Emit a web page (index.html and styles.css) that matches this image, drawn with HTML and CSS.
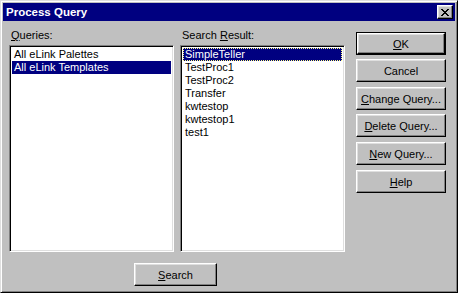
FILE: index.html
```html
<!DOCTYPE html>
<html>
<head>
<meta charset="utf-8">
<link rel="stylesheet" href="styles.css">
</head>
<body>
<div class="window">
  <div class="titlebar">
    <span class="title">Process Query</span>
    <button class="close" aria-label="Close">
      <svg width="8" height="7" viewBox="0 0 8 7" shape-rendering="crispEdges">
        <path d="M0 0h2v1h-2z M6 0h2v1h-2z M1 1h2v1h-2z M5 1h2v1h-2z M2 2h4v1h-4z M3 3h2v1h-2z M2 4h4v1h-4z M1 5h2v1h-2z M5 5h2v1h-2z M0 6h2v1h-2z M6 6h2v1h-2z" fill="#000"/>
      </svg>
    </button>
  </div>
  <div class="content">
    <div class="main">
      <div class="lists">
        <div class="col">
          <div class="label"><u>Q</u>ueries:</div>
          <div class="listbox">
            <div class="item">All eLink Palettes</div>
            <div class="item selected">All eLink Templates</div>
          </div>
        </div>
        <div class="col">
          <div class="label">Search <u>R</u>esult:</div>
          <div class="listbox">
            <div class="item selected focused">SimpleTeller</div>
            <div class="item">TestProc1</div>
            <div class="item">TestProc2</div>
            <div class="item">Transfer</div>
            <div class="item">kwtestop</div>
            <div class="item">kwtestop1</div>
            <div class="item">test1</div>
          </div>
        </div>
      </div>
      <button class="btn search"><u>S</u>earch</button>
    </div>
    <div class="buttons">
      <div class="default-wrap"><button class="btn"><u>O</u>K</button></div>
      <button class="btn g4">Cancel</button>
      <button class="btn g5"><u>C</u>hange Query...</button>
      <button class="btn g4"><u>D</u>elete Query...</button>
      <button class="btn g5"><u>N</u>ew Query...</button>
      <button class="btn g5"><u>H</u>elp</button>
    </div>
  </div>
</div>
</body>
</html>
```

FILE: styles.css
```css
html, body {
  margin: 0;
  padding: 0;
  background: #c0c0c0;
}

.window {
  width: 458px;
  height: 293px;
  box-sizing: border-box;
  background: #c0c0c0;
  border: 1px solid;
  border-color: #dfdfdf #000 #000 #dfdfdf;
  box-shadow: inset 1px 1px #fff, inset -1px -1px #808080;
  padding: 2px;
  font-family: "Liberation Sans", Arial, sans-serif;
  font-size: 11px;
  color: #000;
}

.titlebar {
  height: 18px;
  background: #000080;
  display: flex;
  align-items: center;
  justify-content: space-between;
  padding-left: 3px;
  padding-right: 2px;
}

.title {
  color: #fff;
  font-weight: bold;
  font-size: 11.5px;
}

.close {
  width: 16px;
  height: 14px;
  padding: 0;
  margin: 0;
  background: #c0c0c0;
  border: 1px solid;
  border-color: #fff #000 #000 #fff;
  box-shadow: inset -1px -1px #808080, inset 1px 1px #dfdfdf;
  display: flex;
  align-items: center;
  justify-content: center;
  box-sizing: border-box;
}

.close svg {
  display: block;
  margin-left: 0px;
}

.content {
  display: flex;
  padding: 7px 0 0 6px;
}

.main {
  display: flex;
  flex-direction: column;
}

.lists {
  display: flex;
  gap: 6px;
}

.col {
  display: flex;
  flex-direction: column;
  width: 165px;
}

.label {
  height: 14px;
  line-height: 14px;
  margin-bottom: 3px;
  padding-left: 2px;
}

.listbox {
  height: 207px;
  box-sizing: border-box;
  background: #fff;
  border: 1px solid;
  border-color: #808080 #fff #fff #808080;
  box-shadow: inset 1px 1px #000, inset -1px -1px #dfdfdf;
  padding: 2px;
  overflow: hidden;
}

.item {
  height: 13px;
  line-height: 13px;
  padding-left: 2px;
  white-space: nowrap;
  box-sizing: border-box;
}

.item.selected {
  background: #000080;
  color: #fff;
}

.item.focused {
  border: 1px dotted #ffff80;
  line-height: 11px;
  padding-left: 1px;
}

.btn {
  display: block;
  width: 90px;
  height: 23px;
  box-sizing: border-box;
  margin: 0;
  padding: 0;
  background: #c0c0c0;
  border: 1px solid;
  border-color: #fff #000 #000 #fff;
  box-shadow: inset -1px -1px #808080, inset 1px 1px #dfdfdf;
  font-family: "Liberation Sans", Arial, sans-serif;
  font-size: 11px;
  color: #000;
  text-align: center;
}

.search {
  width: 83px;
  margin-top: 11px;
  margin-left: 125px;
}

.buttons {
  display: flex;
  flex-direction: column;
  margin-left: 11px;
  padding-top: 4px;
}

.default-wrap {
  width: 90px;
  height: 23px;
  box-sizing: border-box;
  border: 1px solid #000;
}

.default-wrap .btn {
  width: 88px;
  height: 21px;
}

.g4 {
  margin-top: 4px;
}

.g5 {
  margin-top: 5px;
}
```
